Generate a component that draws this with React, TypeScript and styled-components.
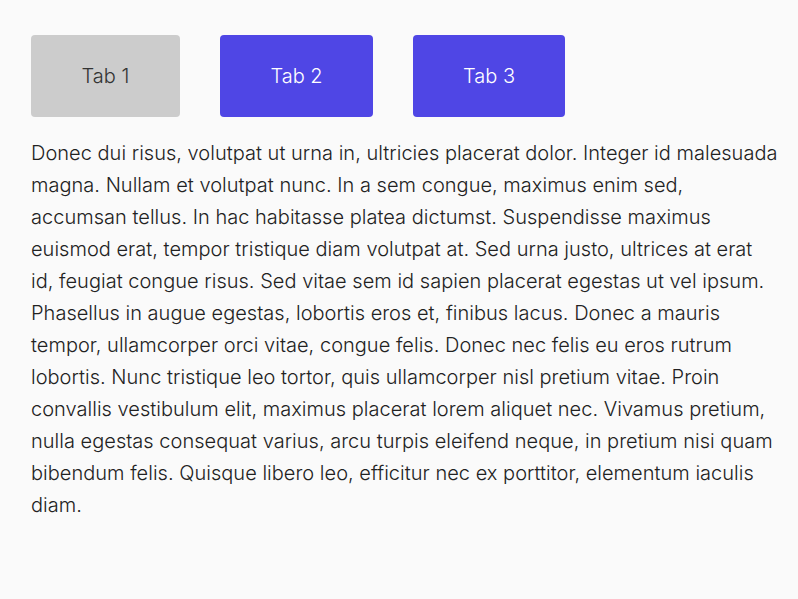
import React, { useState } from "react";
import styled, { createGlobalStyle } from "styled-components";

const Global = createGlobalStyle`
  html, body { margin: 0; padding: 0; background: #fafafa; }
  body { font-family: Inter, "Noto Sans", sans-serif; color: #222; }
`;

const Page = styled.div`
  padding: 35px 19px 0 31px;
`;

const TabBar = styled.div`
  display: flex;
  gap: 40px;
`;

const Tab = styled.button<{ $active: boolean; $w: number }>`
  width: ${(p) => p.$w}px;
  height: 82px;
  border: none;
  border-radius: 4px;
  font-family: Inter, sans-serif;
  font-size: 20px;
  font-weight: 300;
  cursor: pointer;
  background: ${(p) => (p.$active ? "#cccccc" : "#4f46e5")};
  color: ${(p) => (p.$active ? "#333" : "#fff")};
`;

const Text = styled.p`
  margin: 20px 0 0;
  font-size: 20px;
  font-weight: 300;
  letter-spacing: 0.02px;
  line-height: 32px;
  color: #222;
`;

const tabs = [
  { label: "Tab 1", w: 149 },
  { label: "Tab 2", w: 153 },
  { label: "Tab 3", w: 152 },
];

export default function App() {
  const [active, setActive] = useState(0);
  return (
    <Page>
      <Global />
      <TabBar>
        {tabs.map((t, i) => (
          <Tab key={t.label} $w={t.w} $active={active === i} onClick={() => setActive(i)}>
            {t.label}
          </Tab>
        ))}
      </TabBar>
      <Text>
        Donec dui risus, volutpat ut urna in, ultricies placerat dolor. Integer id malesuada magna. Nullam et volutpat nunc. In a sem congue, maximus enim sed, accumsan tellus. In hac habitasse platea dictumst. Suspendisse maximus euismod erat, tempor tristique diam volutpat at. Sed urna justo, ultrices at erat id, feugiat congue risus. Sed vitae sem id sapien placerat egestas ut vel ipsum. Phasellus in augue egestas, lobortis eros et, finibus lacus. Donec a mauris tempor, ullamcorper orci vitae, congue felis. Donec nec felis eu eros rutrum lobortis. Nunc tristique leo tortor, quis ullamcorper nisl pretium vitae. Proin convallis vestibulum elit, maximus placerat lorem aliquet nec. Vivamus pretium, nulla egestas consequat varius, arcu turpis eleifend neque, in pretium nisi quam bibendum felis. Quisque libero leo, efficitur nec ex porttitor, elementum iaculis diam.
      </Text>
    </Page>
  );
}
